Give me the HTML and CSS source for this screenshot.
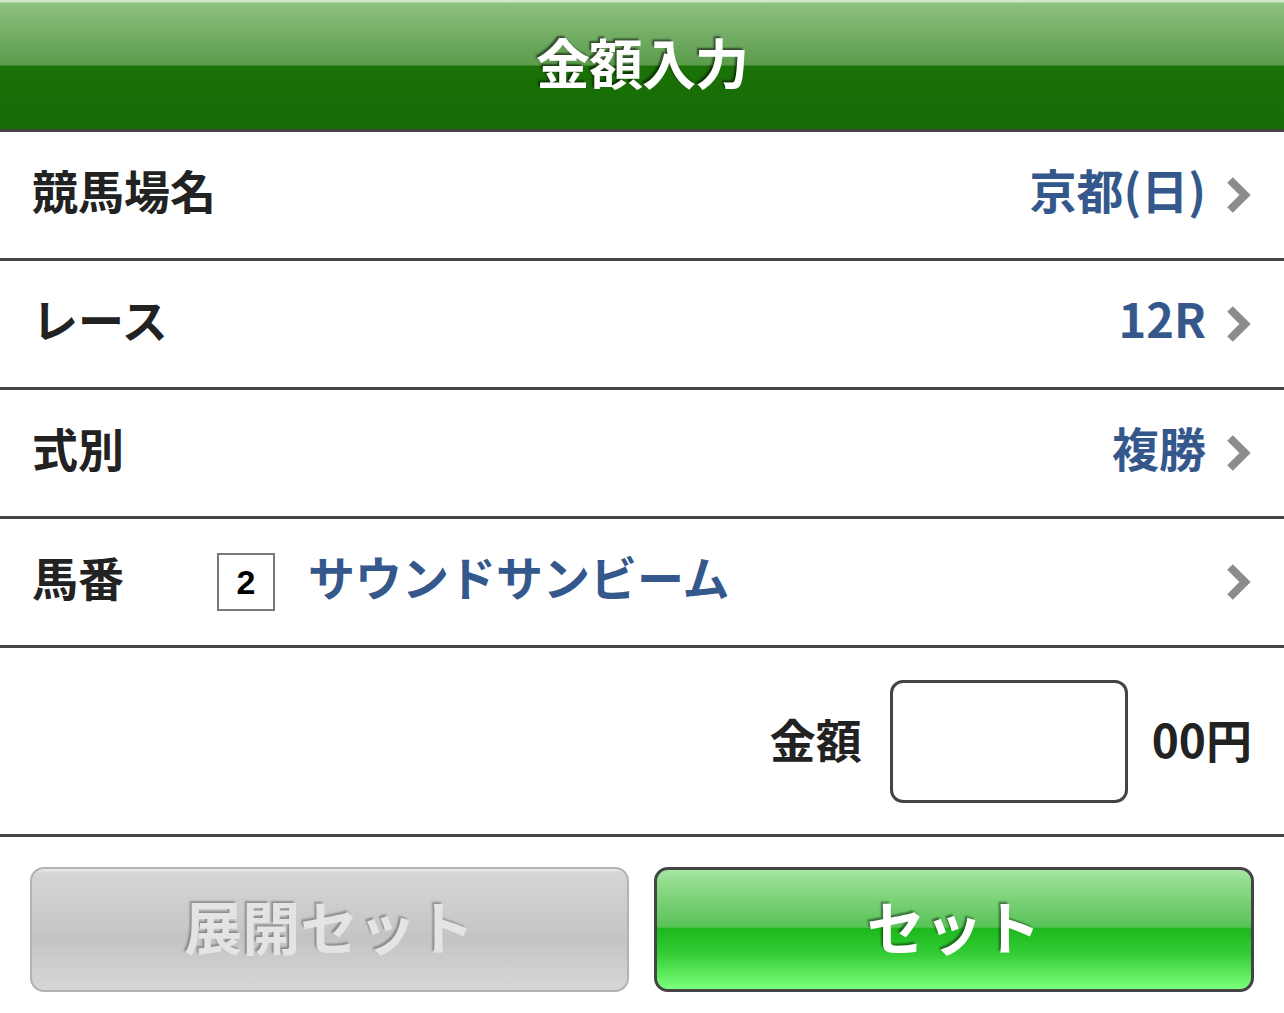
FILE: index.html
```html
<!DOCTYPE html>
<html lang="ja">
<head>
<meta charset="utf-8">
<title>金額入力</title>
<link rel="stylesheet" href="styles.css">
</head>
<body>
<div class="page">
  <header class="topbar"><h1 class="title">金額入力</h1></header>
  <div class="row">
    <span class="label">競馬場名</span>
    <span class="value">京都(日)</span>
    <svg class="chev" viewBox="0 0 26 38"><polyline points="4,4 19,19 4,34"/></svg>
  </div>
  <div class="row">
    <span class="label">レース</span>
    <span class="value">12R</span>
    <svg class="chev" viewBox="0 0 26 38"><polyline points="4,4 19,19 4,34"/></svg>
  </div>
  <div class="row">
    <span class="label">式別</span>
    <span class="value">複勝</span>
    <svg class="chev" viewBox="0 0 26 38"><polyline points="4,4 19,19 4,34"/></svg>
  </div>
  <div class="row">
    <span class="label label-short">馬番</span>
    <span class="num">2</span>
    <span class="horse">サウンドサンビーム</span>
    <svg class="chev" viewBox="0 0 26 38"><polyline points="4,4 19,19 4,34"/></svg>
  </div>
  <div class="amount-row">
    <span class="amount-label">金額</span>
    <div class="amount-input"></div>
    <span class="amount-unit">00円</span>
  </div>
  <div class="buttons">
    <div class="btn btn-gray">展開セット</div>
    <div class="btn btn-green">セット</div>
  </div>
</div>
</body>
</html>
```
FILE: styles.css
```css
html, body {
  margin: 0;
  padding: 0;
  background: #ffffff;
}
body {
  font-family: "Noto Sans CJK JP", "Noto Sans", sans-serif;
  font-weight: 700;
}
.page {
  width: 1284px;
}
.topbar {
  height: 129px;
  border-bottom: 3px solid #444444;
  background: linear-gradient(to bottom,
    #d2e8cc 0px, #d2e8cc 2px,
    #8dc17f 3px, #5b9b4c 65px,
    #1b7207 66px, #166a06 129px);
  display: flex;
  align-items: center;
  justify-content: center;
}
.title {
  margin: 0 0 6px 0;
  color: #ffffff;
  font-size: 54px;
  line-height: 1;
  font-weight: 700;
  letter-spacing: -1px;
  text-shadow: -2px -2px 2px rgba(0, 0, 0, 0.55);
}
.row {
  border-bottom: 3px solid #444444;
  display: flex;
  align-items: center;
  padding: 0 32px 13px 32px;
  box-sizing: content-box;
  height: 113px;
}
.label {
  font-size: 46px;
  line-height: 1;
  color: #222222;
}
.label-short {
  width: 185px;
}
.value {
  margin-left: auto;
  font-size: 47px;
  line-height: 1;
  color: #35588c;
  margin-right: 3px;
}
.chev {
  width: 26px;
  height: 38px;
  margin-left: 17px;
  margin-top: 12px;
  flex: none;
}
.chev polyline {
  fill: none;
  stroke: #8c8c8c;
  stroke-width: 8;
  stroke-linejoin: miter;
  stroke-linecap: butt;
}
.num {
  width: 54px;
  height: 54px;
  border: 2px solid #7a7a7a;
  display: flex;
  align-items: center;
  justify-content: center;
  font-family: "Liberation Sans", Arial, sans-serif;
  font-size: 34px;
  color: #000000;
  margin-top: 13px;
}
.horse {
  margin-left: 33px;
  font-size: 47px;
  line-height: 1;
  color: #35588c;
  flex: 1;
}
.amount-row {
  height: 186px;
  border-bottom: 3px solid #444444;
  display: flex;
  align-items: center;
  justify-content: flex-end;
  padding: 0 32px;
}
.amount-label {
  font-size: 46px;
  line-height: 1;
  color: #222222;
  margin-right: 28px;
  margin-bottom: 6px;
}
.amount-input {
  width: 232px;
  height: 117px;
  border: 3px solid #444444;
  border-radius: 13px;
  background: #ffffff;
}
.amount-unit {
  margin-left: 24px;
  font-size: 46px;
  line-height: 1;
  color: #222222;
  margin-bottom: 6px;
}
.buttons {
  display: flex;
  gap: 25px;
  padding: 30px 30px 0 30px;
}
.btn {
  flex: 1;
  height: 125px;
  box-sizing: border-box;
  border-radius: 14px;
  display: flex;
  align-items: center;
  justify-content: center;
  font-size: 58px;
  line-height: 1;
  padding-bottom: 10px;
}
.btn-gray {
  border: 2px solid #b2b2b2;
  background: linear-gradient(to bottom,
    #ececec 0px, #d5d5d5 4px, #c7c7c7 50%, #c3c3c3 55%, #d6d6d6 100%);
  color: #e4e4e4;
  text-shadow: -2px -2px 2px rgba(0, 0, 0, 0.3);
}
.btn-green {
  border: 3px solid #444444;
  background: linear-gradient(to bottom,
    #a7e6a3 0px, #91dd8d 10%, #58c257 48%, #1cb81c 49%, #33cc35 70%, #7bff7a 100%);
  color: #ffffff;
  text-shadow: -2px -2px 2px rgba(0, 0, 0, 0.45);
}
```
